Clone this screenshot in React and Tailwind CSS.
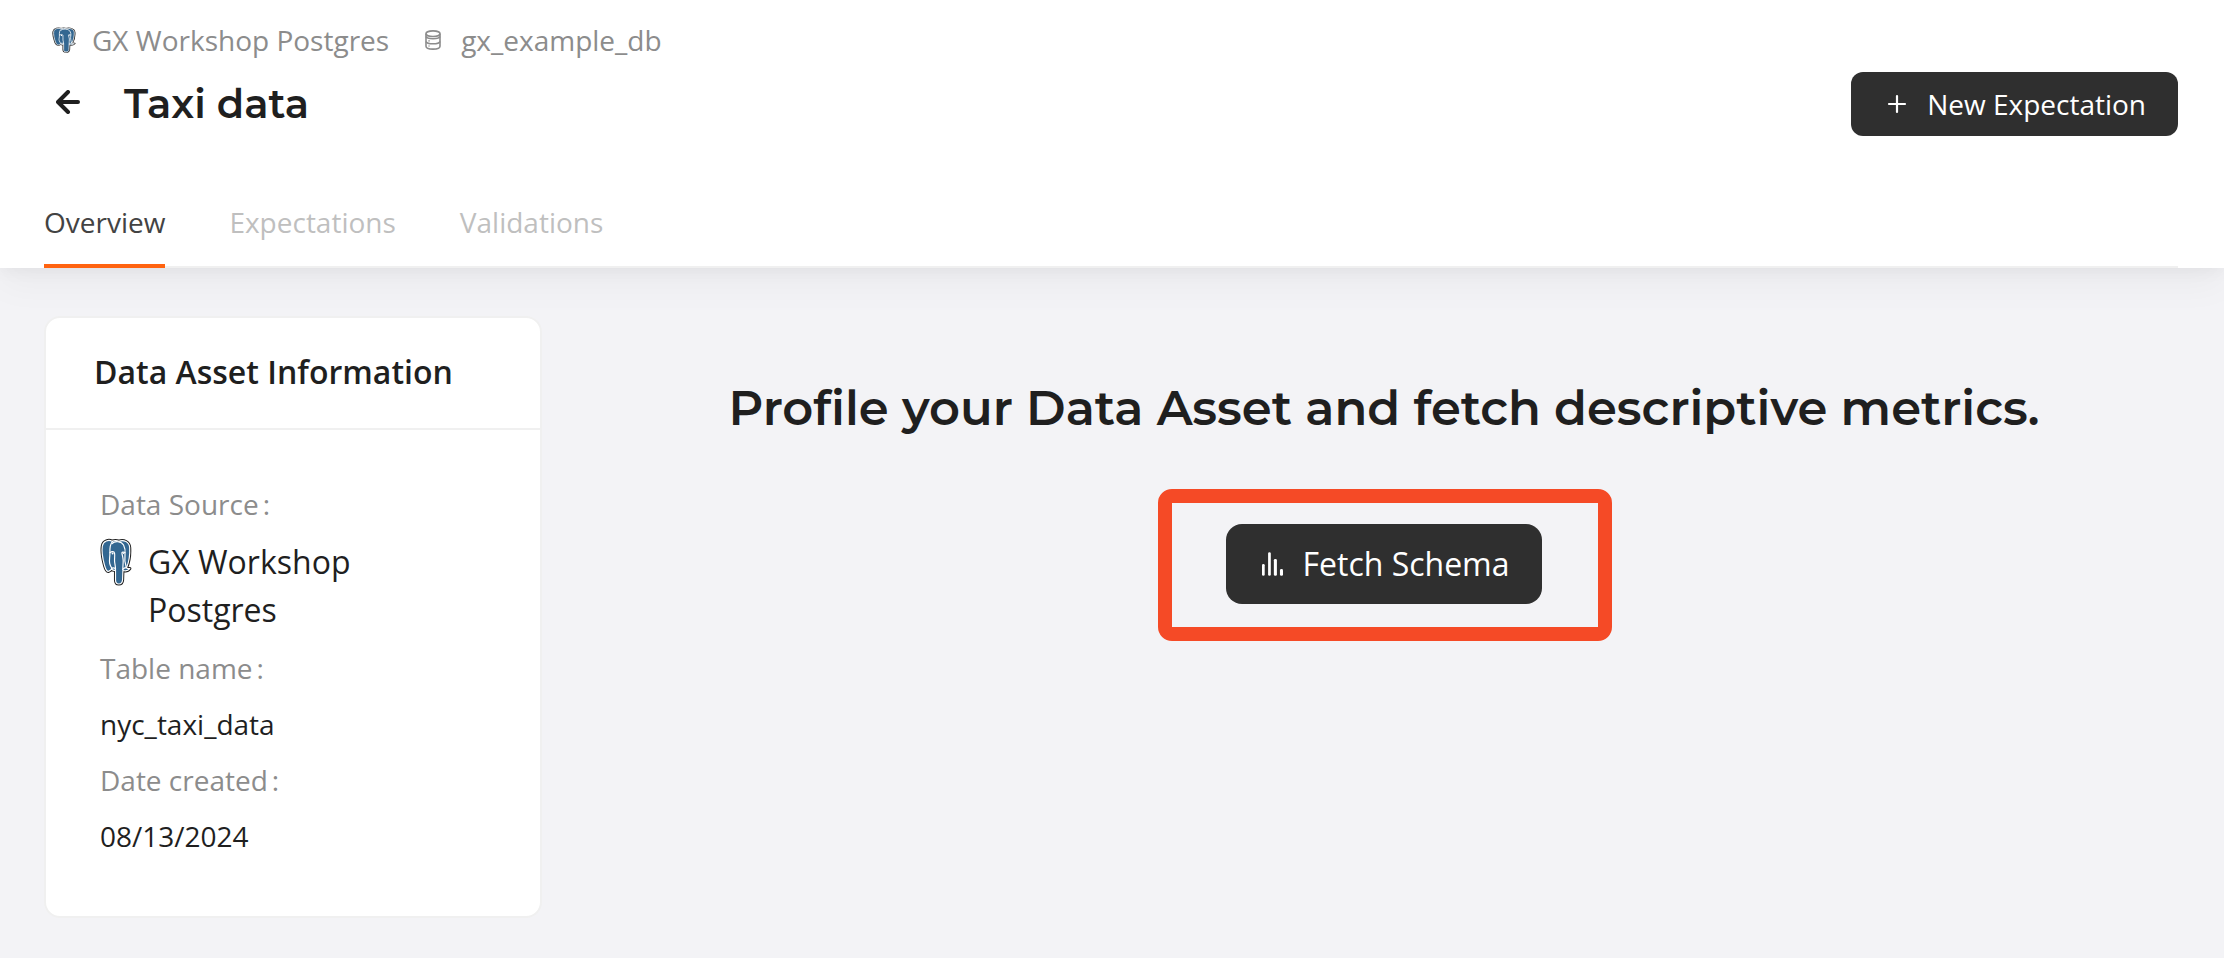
const tabs = ['Overview', 'Expectations', 'Validations'];

function PostgresLogo({ className }) {
  const outline =
    'M12.5 3.200C9 1.600 3.400 2.600 2.400 8c-.8 5 .6 13.600 2.300 19.500C5.800 31.400 7.300 33.800 9 33.200c1.200-.4 2-1.500 3-1.900 1 .8 2.300 1.300 4 1V42c0 2.600 1 4 3.400 4s3.700-1.400 3.900-4.200l.3-9.300c2.600.6 5.700.1 7.100-1.900-1.200.2-2.600.1-3.400-.7C29.500 25 31 16 30.600 9.500 30.300 4 24.500 1.300 19.500 3.200c-2.300-.9-4.700-.9-7 0Z';
  return (
    <svg className={className} viewBox="0 0 33 48" preserveAspectRatio="none" aria-hidden="true">
      <path d={outline} fill="#fff" stroke="#1f1f1f" strokeWidth="3.200" strokeLinejoin="round" />
      <path d={outline} fill="#336791" stroke="#fff" strokeWidth="1.200" strokeLinejoin="round" />
      <g fill="none" stroke="#fff" strokeWidth="1.200" strokeLinecap="round" strokeLinejoin="round">
        <path d="M13 3.400c-2.700 2.600-3 6.600-2.800 11.600.1 4.500-1 7.500-.2 10.500.5 2 1.300 3.500 2.200 4.700" />
        <path d="M12.500 5.600C15 2.800 22 3 24.300 7c1.600 3 2 6 1.500 9.500-.5 3.500-.2 8.500 1.300 13" />
        <path d="M10.300 14.700c1.800-1.500 4.300-1.300 4.700.5.600 3-.4 6 .1 9 .4 2.400 1 4.500.9 7.500" />
        <path d="M25.700 14.600c-1.600-1-3.300-.6-3.100.6.3 2.300 1.200 4.300 1.300 7 .1 3-.4 6-.4 9.500" />
        <path d="M11.800 30.600c1.200-1.200 2.800-.9 4.200-.2M23.500 31.500c.6-1 1.900-1.700 3.600-1.800" />
      </g>
      <circle cx="13" cy="15.500" r="1" fill="#fff" />
      <circle cx="24.300" cy="15.300" r=".8" fill="#fff" />
    </svg>
  );
}

function DatabaseIcon() {
  return (
    <svg className="h-5 w-4" viewBox="0 0 16 20" fill="none" stroke="#8c8c8c" strokeWidth="1.600" aria-hidden="true">
      <ellipse cx="8" cy="3.700" rx="7" ry="2.800" />
      <path d="M1 3.700v12.600C1 18 4 19.100 8 19.100s7-1.100 7-2.800V3.700" />
      <path d="M1 11.500C1.500 13 4 13.800 8 13.800s6.500-.8 7-2.300M1 6.500C1.500 8 4 8.700 8 8.700s6.500-.7 7-2.200" />
      <path d="M3.300 10.800h1.500M3.300 16h1.500" strokeWidth="1.200" />
    </svg>
  );
}

function Label({ children }) {
  return (
    <dt className="flex gap-1 text-[28px] leading-11 text-[#8c8c8c]">
      <span>{children}</span>
      <span>:</span>
    </dt>
  );
}

export default function App() {
  return (
    <div className="min-h-screen bg-[#f3f3f6] font-['Open_Sans','Noto_Sans',sans-serif] text-[#1f1f1f]">
      <header className="relative bg-white pt-[18px] pr-[46px] pl-11 shadow-[0_2px_16px_rgba(0,0,0,0.05),0_16px_36px_rgba(0,0,0,0.04)]">
        <div className="flex items-center pl-2 text-[28px] leading-11 text-[#8c8c8c]">
          <PostgresLogo className="h-[26px] w-6" />
          <span className="ml-4">GX Workshop Postgres</span>
          <span className="mr-5 ml-9">
            <DatabaseIcon />
          </span>
          <span>gx_example_db</span>
        </div>

        <div className="flex items-center justify-between pt-[10px]">
          <div className="flex items-center">
            <button type="button" aria-label="Back" className="flex h-12 w-12 items-start justify-center pt-[10px]">
              <svg className="h-6 w-6" viewBox="0 0 24 24" fill="none" stroke="#1f1f1f" strokeWidth="4" strokeLinecap="round" strokeLinejoin="round" aria-hidden="true">
                <path d="M12 2 2 12l10 10M2.500 12H22" />
              </svg>
            </button>
            <h1 className="ml-8 font-['Montserrat','Inter',sans-serif] text-[40px] leading-12 font-semibold">Taxi data</h1>
          </div>
          <button type="button" className="flex h-16 items-center gap-4 rounded-xl bg-[#2f2f2f] px-8 text-[28px] leading-11 text-white">
            <svg className="h-7 w-7" viewBox="0 0 28 28" fill="none" stroke="currentColor" strokeWidth="2.200" strokeLinecap="round" aria-hidden="true">
              <path d="M14 6v16M6 14h16" />
            </svg>
            New Expectation
          </button>
        </div>

        <nav className="mt-16 flex gap-16 shadow-[inset_0_-2px_0_#f0f0f0]">
          {tabs.map((tab, i) => (
            <a
              key={tab}
              href={'#' + tab.toLowerCase()}
              aria-current={i === 0 ? 'page' : undefined}
              className={
                i === 0
                  ? 'border-b-4 border-[#ff6310] pb-5 text-[28px] leading-11 text-[#434343]'
                  : 'border-b-4 border-transparent pb-5 text-[28px] leading-11 text-[#bfbfbf]'
              }
            >
              {tab}
            </a>
          ))}
        </nav>
      </header>

      <main className="flex items-start gap-12 py-12 pr-[46px] pl-11">
        <section className="w-[498px] shrink-0 rounded-2xl border-2 border-[#f0f0f0] bg-white">
          <h2 className="border-b-2 border-[#f0f0f0] px-12 pt-[30px] pb-8 text-[32px] leading-12 font-semibold">
            Data Asset Information
          </h2>
          <dl className="flex flex-col gap-3 pt-13 pr-16 pb-[58px] pl-[54px] text-[28px] leading-11">
            <Label>Data Source</Label>
            <dd className="flex gap-4 text-[32px] leading-12">
              <PostgresLogo className="h-12 w-8 shrink-0" />
              <span>GX Workshop Postgres</span>
            </dd>
            <Label>Table name</Label>
            <dd>nyc_taxi_data</dd>
            <Label>Date created</Label>
            <dd>08/13/2024</dd>
          </dl>
        </section>

        <section className="flex flex-1 flex-col items-center pt-15">
          <h2 className="text-center font-['Montserrat','Inter',sans-serif] text-[48px] leading-16 font-semibold">
            Profile your Data Asset and fetch descriptive metrics.
          </h2>
          <div className="relative mt-[84px]">
            <button type="button" className="flex h-20 items-center gap-4 rounded-2xl bg-[#2f2f2f] px-8 text-[32px] leading-12 text-white">
              <span className="flex w-7 justify-center">
                <svg className="h-6 w-[21px]" viewBox="0 0 62 70" fill="currentColor" aria-hidden="true">
                  <rect x="0" y="35" width="8" height="35" rx="4" />
                  <rect x="18" y="0" width="8" height="70" rx="4" />
                  <rect x="35" y="20" width="9" height="50" rx="4" />
                  <rect x="53" y="50" width="9" height="20" rx="4" />
                </svg>
              </span>
              Fetch Schema
            </button>
            <div className="pointer-events-none absolute -top-[35px] -right-[70px] -bottom-[37px] -left-[68px] rounded-[14px] border-[14px] border-[#f54a26]" />
          </div>
        </section>
      </main>
    </div>
  );
}
